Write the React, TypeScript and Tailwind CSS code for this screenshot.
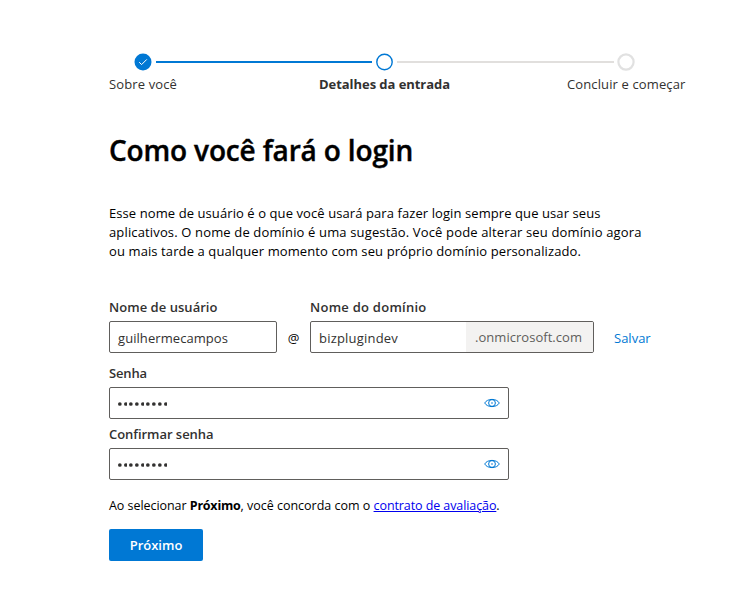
import type { ReactNode } from 'react';

function EyeIcon() {
  return (
    <svg className="h-4 w-4 shrink-0" viewBox="0 0 16 16" fill="none" stroke="#0078d4" strokeWidth="1">
      <path d="M.7 8C2 5.700 4.700 4.400 8 4.400S14 5.700 15.300 8C14 10.300 11.300 11.600 8 11.600S2 10.300.7 8Z" />
      <circle cx="8" cy="8" r="3.400" />
      <circle cx="8" cy="8" r=".8" fill="#0078d4" stroke="none" />
    </svg>
  );
}

function Label({ className = '', children }: { className?: string; children: ReactNode }) {
  return <label className={`block h-7 text-[13px] leading-5 font-semibold whitespace-nowrap text-[#323130] ${className}`}>{children}</label>;
}

function PasswordField({ label, spacing }: { label: string; spacing: string }) {
  return (
    <div className="w-[400px]">
      <Label className={`pt-[5px] ${spacing}`}>{label}</Label>
      <div className="mt-px flex h-8 items-center justify-between rounded-xs border border-[#605e5c] pr-2 pl-2">
        <div className="flex gap-[2px] pt-[2px]">
          {Array.from({ length: 9 }, (_, i) => (
            <svg key={i} className="h-1 w-[3.7px]" viewBox="0 0 3.7 4">
              <circle cx="1.85" cy="2" r="1.85" fill="#323130" />
            </svg>
          ))}
        </div>
        <EyeIcon />
      </div>
    </div>
  );
}

export default function App() {
  return (
    <main className="min-h-[607px] w-[746px] bg-white pt-[53px] pl-[109px] font-['Open_Sans','Noto_Sans',sans-serif] text-[13px] text-black">
      <div className="flex h-[18px] w-[527px] items-center pl-[25px]">
        <svg className="h-[18px] w-[18px] shrink-0" viewBox="0 0 18 18" fill="none">
          <circle cx="9" cy="9" r="8.500" fill="#0078d4" />
          <path d="m5.200 9.200 2.400 2.400 5.200-5.200" stroke="#fff" strokeWidth="1" />
        </svg>
        <div className="ml-1 h-[2px] w-[216px] shrink-0 bg-[#0078d4]" />
        <svg className="ml-1 h-[18px] w-[18px] shrink-0" viewBox="0 0 18 18" fill="none">
          <circle cx="8.500" cy="9" r="7.700" stroke="#0078d4" strokeWidth="1.400" />
        </svg>
        <div className="ml-[3px] h-[2px] w-[217px] shrink-0 bg-[#e1dfdd]" />
        <svg className="ml-[3px] h-[18px] w-[18px] shrink-0" viewBox="0 0 18 18" fill="none">
          <circle cx="9" cy="9" r="7.600" stroke="#e1e1e1" strokeWidth="2.200" />
        </svg>
      </div>
      <div className="mt-1 flex h-5 items-center text-[#323130]">
        <span className="w-[210px] tracking-[0.127px]">Sobre você</span>
        <span className="w-[248px] font-bold tracking-[-0.052px]">Detalhes da entrada</span>
        <span className="tracking-[0.125px]">Concluir e começar</span>
      </div>

      <h1 className="mt-[37px] text-[28px] leading-9 font-semibold tracking-[-0.164px] [-webkit-text-stroke:0.4px_#000]">Como você fará o login</h1>

      <p className="mt-9 leading-[19px] whitespace-nowrap">
        <span className="block tracking-[0.085px]">Esse nome de usuário é o que você usará para fazer login sempre que usar seus</span>
        <span className="block tracking-[0.145px]">aplicativos. O nome de domínio é uma sugestão. Você pode alterar seu domínio agora</span>
        <span className="block tracking-[0.105px]">ou mais tarde a qualquer momento com seu próprio domínio personalizado.</span>
      </p>

      <div className="mt-8 flex items-end">
        <div className="w-[168px]">
          <Label className="pt-1 tracking-[0.04px]">Nome de usuário</Label>
          <div className="flex h-8 items-center rounded-xs border border-[#605e5c] pt-1 pl-2 tracking-[0.069px] text-[#323130]">guilhermecampos</div>
        </div>
        <span className="flex h-8 w-[33px] items-center justify-center pt-1">@</span>
        <div className="w-[284px]">
          <Label className="pt-1 tracking-[0.256px]">Nome do domínio</Label>
          <div className="flex h-8 overflow-hidden rounded-xs border border-[#605e5c]">
            <span className="flex flex-1 items-center pt-1 pl-2 tracking-[0.2px] text-[#323130]">bizplugindev</span>
            <span className="flex w-[127px] items-center bg-[#f3f2f1] pt-[2px] pl-[9px] tracking-[0.037px] text-[#605e5c]">.onmicrosoft.com</span>
          </div>
        </div>
        <span className="flex h-8 items-center pt-1 pl-5 text-[#0078d4]">Salvar</span>
      </div>

      <div className="mt-[5px]">
        <PasswordField label="Senha" spacing="tracking-[-0.139px]" />
        <PasswordField label="Confirmar senha" spacing="tracking-[-0.045px]" />
      </div>

      <p className="mt-4 text-[12.5px] leading-5 whitespace-nowrap">
        <span className="tracking-[-0.05px]">Ao selecionar </span>
        <b className="tracking-[-0.22px]">Próximo</b>
        <span className="tracking-[-0.01px]">, você concorda com o </span>
        <a className="tracking-[-0.09px] text-[#0000ee] underline underline-offset-[1px]">contrato de avaliação</a>.
      </p>

      <button className="mt-[13px] flex h-8 w-[94px] items-center justify-center rounded-xs bg-[#0078d4] pt-[2px] font-semibold text-white">Próximo</button>
    </main>
  );
}
